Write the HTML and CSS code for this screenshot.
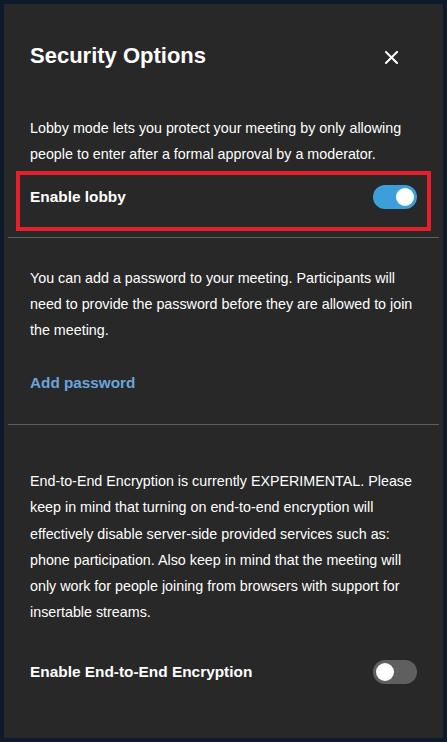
FILE: index.html
```html
<!DOCTYPE html>
<html lang="en">
<head>
  <meta charset="UTF-8" />
  <meta name="viewport" content="width=device-width, initial-scale=1.0"/>
  <title>Security Options</title>
  <link rel="stylesheet" href="styles.css">
</head>
<body>

<!-- Boîte de dialogue -->
<div class="dialog">
  <div class="dialog-header">
    <h2>Security Options</h2>
    <button class="close-btn" aria-label="Close">
      <svg width="13" height="13" viewBox="0 0 13 13">
        <path d="M1 1 L12 12 M12 1 L1 12" stroke="#fff" stroke-width="2" stroke-linecap="square"/>
      </svg>
    </button>
  </div>

  <!-- Lobby -->
  <div class="section section-lobby">
    <p>Lobby mode lets you protect your meeting by only allowing people to enter after a formal approval by a moderator.</p>
    <div class="highlight">
      <div class="option-row">
        <span class="option-label">Enable lobby</span>
        <span class="toggle on"><span class="knob"></span></span>
      </div>
    </div>
  </div>

  <hr class="divider" />

  <!-- Mot de passe -->
  <div class="section section-password">
    <p>You can add a password to your meeting. Participants will need to provide the password before they are allowed to join the meeting.</p>
    <a class="link" href="#">Add password</a>
  </div>

  <hr class="divider" />

  <!-- Chiffrement -->
  <div class="section section-e2ee">
    <p>End-to-End Encryption is currently EXPERIMENTAL. Please keep in mind that turning on end-to-end encryption will effectively disable server-side provided services such as: phone participation. Also keep in mind that the meeting will only work for people joining from browsers with support for insertable streams.</p>
    <div class="option-row e2ee-row">
      <span class="option-label">Enable End-to-End Encryption</span>
      <span class="toggle"><span class="knob"></span></span>
    </div>
  </div>
</div>

</body>
</html>
```

FILE: styles.css
```css
/* Styles de base */
body {
  margin: 0;
  background: #0c1a2c;
  font-family: 'Liberation Sans', Arial, sans-serif;
  color: #ffffff;
}

.dialog {
  margin: 4px;
  height: 734px;
  box-sizing: border-box;
  padding: 0 4px;
  background: #282828;
}

.dialog-header {
  display: flex;
  justify-content: space-between;
  align-items: center;
  padding: 37px 36px 0 22px;
}

.dialog-header h2 {
  margin: 0;
  font-size: 22px;
  line-height: 30px;
  font-weight: bold;
  color: #ffffff;
}

.close-btn {
  width: 24px;
  height: 24px;
  margin-top: 2px;
  padding: 0;
  border: none;
  background: none;
  display: flex;
  justify-content: center;
  align-items: center;
  cursor: pointer;
}

.section {
  padding: 0 22px;
}

.section p {
  margin: 0;
  font-size: 14.3px;
  line-height: 26px;
  color: #ffffff;
}

.section-lobby {
  padding-top: 44px;
  padding-bottom: 6px;
}

.highlight {
  margin: 4px -14px 0;
  border: 4px solid #e3202b;
  padding: 0 10px 8px;
}

.option-row {
  display: flex;
  justify-content: space-between;
  align-items: center;
  height: 44px;
}

.option-label {
  font-size: 15.4px;
  font-weight: bold;
}

.divider {
  margin: 0;
  border: none;
  border-top: 1px solid #5d6066;
}

.section-password {
  padding-top: 27px;
  padding-bottom: 28px;
}

.link {
  display: block;
  margin-top: 27px;
  font-size: 15.3px;
  line-height: 26px;
  font-weight: bold;
  color: #6aa5de;
  text-decoration: none;
}

.section-e2ee {
  padding-top: 43px;
}

.section-e2ee p {
  line-height: 26.3px;
}

.e2ee-row {
  height: 30px;
  margin-top: 31px;
}

/* Interrupteur */
.toggle {
  width: 44px;
  height: 24px;
  box-sizing: border-box;
  padding: 3px;
  border-radius: 12px;
  background: #5f5f5f;
  display: flex;
  justify-content: flex-start;
}

.toggle.on {
  background: #3d9fd9;
  justify-content: flex-end;
}

.knob {
  width: 18px;
  height: 18px;
  border-radius: 50%;
  background: #ffffff;
}
```
